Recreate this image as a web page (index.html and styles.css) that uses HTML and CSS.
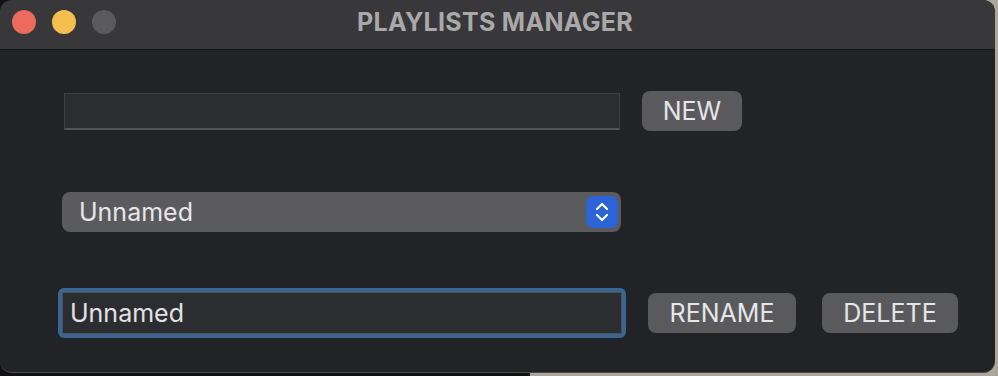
FILE: index.html
```html
<!DOCTYPE html>
<html lang="en">
<head>
    <meta charset="UTF-8">
    <title>Playlists Manager</title>
    <link rel="stylesheet" href="styles.css">
</head>
<body>
    <div class="window">
        <div class="titlebar">
            <div class="lights">
                <span class="light red"></span>
                <span class="light yellow"></span>
                <span class="light grey"></span>
            </div>
            <h1>PLAYLISTS MANAGER</h1>
        </div>

        <div class="content">
            <div class="row row-new">
                <input type="text" class="text-field new-field" value="">
                <button class="btn btn-new">NEW</button>
            </div>

            <div class="row row-select">
                <div class="popup">
                    <span class="popup-label">Unnamed</span>
                    <span class="stepper">
                        <svg width="16" height="22" viewBox="0 0 16 22">
                            <path d="M3 8 L8 3 L13 8" fill="none" stroke="#fff" stroke-width="2.2" stroke-linecap="round" stroke-linejoin="round"/>
                            <path d="M3 14 L8 19 L13 14" fill="none" stroke="#fff" stroke-width="2.2" stroke-linecap="round" stroke-linejoin="round"/>
                        </svg>
                    </span>
                </div>
            </div>

            <div class="row row-rename">
                <div class="focus-ring">
                    <input type="text" class="text-field rename-field" value="Unnamed">
                </div>
                <button class="btn btn-rename">RENAME</button>
                <button class="btn btn-delete">DELETE</button>
            </div>
        </div>
    </div>
</body>
</html>
```

FILE: styles.css
```css
* {
    margin: 0;
    padding: 0;
    box-sizing: border-box;
}

body {
    width: 998px;
    height: 376px;
    overflow: hidden;
    font-family: 'Inter', 'Liberation Sans', sans-serif;
    background: linear-gradient(to right, #121212 0, #121212 530px, #aaa79a 530px);
}

.window {
    width: 995px;
    height: 373px;
    background: #222327;
    border-radius: 12px;
    border-bottom: 1px solid #4a4a4c;
    overflow: hidden;
}

.titlebar {
    position: relative;
    height: 50px;
    background: #38383a;
    border-bottom: 1px solid #151517;
    display: flex;
    align-items: center;
    justify-content: center;
}

.lights {
    position: absolute;
    left: 12px;
    top: 10px;
    display: flex;
    gap: 16px;
}

.light {
    width: 24px;
    height: 24px;
    border-radius: 50%;
}

.red { background: #ed6a5e; }
.yellow { background: #f5bf4f; }
.grey { background: #5b5b5d; }

.titlebar h1 {
    font-size: 25px;
    font-weight: 700;
    color: #a9a9aa;
    letter-spacing: 0.3px;
    margin-top: -6px;
    margin-left: -5px;
}

.content {
    padding-top: 36px;
    display: flex;
    flex-direction: column;
    gap: 51px;
}

.row {
    height: 50px;
    display: flex;
    align-items: center;
}

.text-field {
    font-family: inherit;
    font-size: 25px;
    color: #e2e2e4;
    background: #2c2d31;
    border: 1px solid #404043;
    border-bottom: 2px solid #545457;
    outline: none;
}

.new-field {
    margin-left: 64px;
    width: 556px;
    height: 37px;
}

.btn {
    font-family: inherit;
    font-size: 25px;
    color: #e6e6e8;
    background: #5a5a5c;
    border: none;
    border-radius: 8px;
    height: 40px;
    cursor: pointer;
}

.btn-new {
    margin-left: 22px;
    width: 100px;
}

.popup {
    margin-left: 62px;
    width: 559px;
    height: 40px;
    background: #5b5b5d;
    border-radius: 8px;
    display: flex;
    align-items: center;
    padding-left: 17px;
    padding-right: 3px;
}

.popup-label {
    font-size: 25px;
    color: #e6e6e8;
}

.stepper {
    margin-left: auto;
    width: 32px;
    height: 32px;
    border-radius: 7px;
    background: #2c63d7;
    display: flex;
    align-items: center;
    justify-content: center;
}

.focus-ring {
    margin-left: 58px;
    width: 568px;
    height: 50px;
    border: 4px solid #386592;
    border-radius: 6px;
    display: flex;
}

.rename-field {
    width: 100%;
    height: 100%;
    padding-left: 7px;
    border: 1px solid #4f5158;
}

.btn-rename {
    margin-left: 22px;
    width: 148px;
}

.btn-delete {
    margin-left: 26px;
    width: 136px;
}
```
